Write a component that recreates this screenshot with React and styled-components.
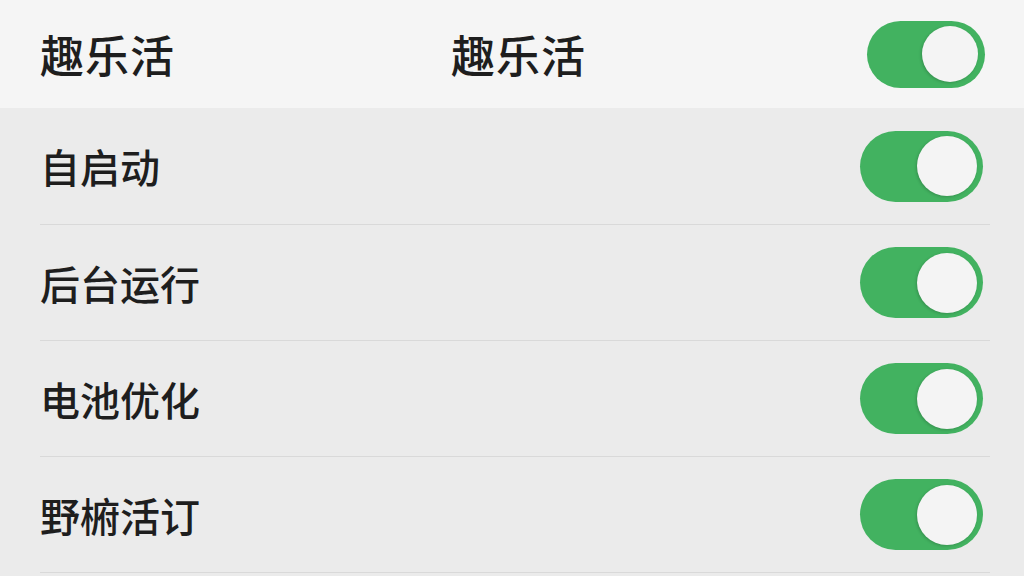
import React from "react";
import styled, { createGlobalStyle } from "styled-components";

const Global = createGlobalStyle`
  html, body { margin: 0; padding: 0; }
  body {
    background: #ebebeb;
    font-family: "Noto Sans CJK SC", "Noto Sans", sans-serif;
    color: #1e1e1e;
  }
`;

const Page = styled.div`
  width: 1024px;
  height: 576px;
  overflow: hidden;
  background: #ebebeb;
`;

const Header = styled.header`
  height: 108px;
  background: #f5f5f5;
  display: grid;
  grid-template-columns: 1fr auto 1fr;
  align-items: center;
  padding: 0 39px 0 40px;
  box-sizing: border-box;
`;

const HeaderTitle = styled.div`
  font-size: 44px;
  font-weight: 500;
  line-height: 1;
  letter-spacing: 1px;
  justify-self: ${(p) => p.$align || "start"};
  margin-left: ${(p) => p.$shift || 0}px;
`;

const HeaderEnd = styled.div`
  justify-self: end;
  display: flex;
`;

const List = styled.div`
  display: flex;
  flex-direction: column;
`;

const Row = styled.div`
  height: ${(p) => (p.$first ? 117 : 116)}px;
  display: flex;
  align-items: center;
  justify-content: space-between;
  margin: 0 34px 0 40px;
  border-bottom: 1px solid #d9d9d9;
  box-sizing: border-box;
`;

const Label = styled.span`
  font-size: 40px;
  font-weight: 500;
  line-height: 1;
`;

const Track = styled.div`
  width: ${(p) => p.$w}px;
  height: ${(p) => p.$h}px;
  border-radius: ${(p) => p.$h / 2}px;
  background: #42b260;
  display: flex;
  align-items: center;
  justify-content: flex-end;
  padding-right: ${(p) => p.$pad}px;
  box-sizing: border-box;
  margin-right: ${(p) => p.$mr || 0}px;
`;

const Knob = styled.div`
  width: ${(p) => p.$d}px;
  height: ${(p) => p.$d}px;
  border-radius: 50%;
  background: #f4f4f4;
  box-shadow: -1px 1px 3px rgba(0, 0, 0, 0.18);
`;

const Toggle = ({ w, h, d, pad, mr }) => (
  <Track $w={w} $h={h} $pad={pad} $mr={mr}>
    <Knob $d={d} />
  </Track>
);

const rows = ["自启动", "后台运行", "电池优化", "野椨活订"];

export default function App() {
  return (
    <Page>
      <Global />
      <Header>
        <HeaderTitle>趣乐活</HeaderTitle>
        <HeaderTitle $align="center" $shift={12}>趣乐活</HeaderTitle>
        <HeaderEnd>
          <Toggle w={118} h={67} d={56} pad={7} />
        </HeaderEnd>
      </Header>
      <List>
        {rows.map((r, i) => (
          <Row key={r} $first={i === 0}>
            <Label>{r}</Label>
            <Toggle w={123} h={71} d={60} pad={6} mr={7} />
          </Row>
        ))}
      </List>
    </Page>
  );
}
